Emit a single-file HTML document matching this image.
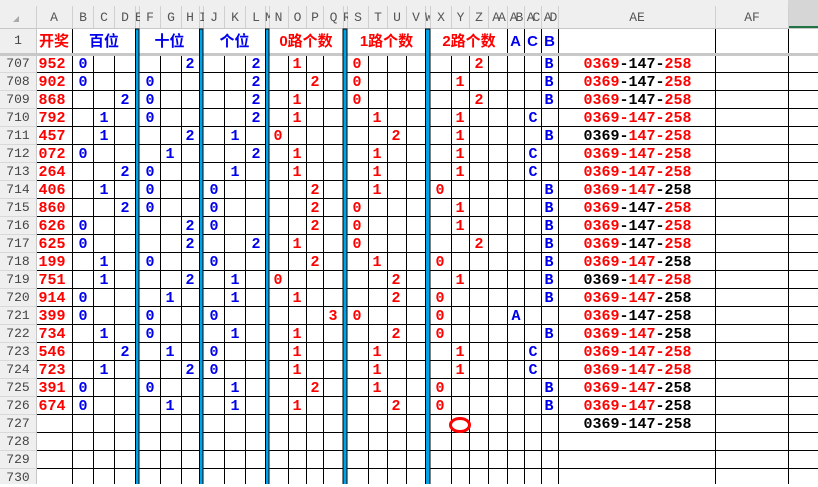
<!DOCTYPE html>
<html><head><meta charset="utf-8"><style>
*{margin:0;padding:0}
body{width:818px;height:484px;overflow:hidden;background:#fff;position:relative;font-family:"Liberation Mono","Noto Sans CJK SC",monospace}
svg{position:absolute;left:0;top:0}
.h{position:absolute;top:6px;height:22px;line-height:24px;font-size:13px;color:#555;text-align:center;font-family:"Liberation Mono",monospace}
.rn{position:absolute;left:0;width:36px;text-align:center;font-size:13px;color:#444;height:18px;line-height:18px}
.r{position:absolute;left:0;width:818px;height:18px;line-height:19px;font-size:15px;font-weight:bold}
.r i,.r b,.r u{position:absolute;font-style:normal;text-decoration:none;width:20px;text-align:center}
.r i{color:#ff0000;width:36px;left:34px}
.r b{color:#0000ee}
.r u{color:#ff0000}
.r em{position:absolute;left:560px;width:155px;text-align:center;font-style:normal;color:#000}
em s{text-decoration:none;color:#ff0000}
.t{position:absolute;top:28px;height:26px;line-height:27px;font-size:15px;font-weight:bold;text-align:center;font-family:"Liberation Sans","Noto Sans CJK SC",sans-serif}
</style></head><body>
<svg width="818" height="484">
<rect x="0" y="0" width="818" height="28" fill="#efefef"/>
<rect x="0" y="28" width="36" height="456" fill="#efefef"/>
<rect x="788" y="0" width="30" height="28" fill="#d6d6d6"/>
<rect x="788" y="26" width="30" height="2" fill="#217346"/>
<polygon points="19,16 19,22 13,22" fill="#aaa"/>
<path d="M36.5 6V28M72.5 6V28M93.5 6V28M114.5 6V28M135.5 6V28M139.5 6V28M160.5 6V28M181.5 6V28M199.5 6V28M203.5 6V28M224.5 6V28M245.5 6V28M265.5 6V28M269.5 6V28M288.5 6V28M306.5 6V28M323.5 6V28M343.5 6V28M347.5 6V28M368.5 6V28M387.5 6V28M406.5 6V28M425.5 6V28M430.5 6V28M451.5 6V28M469.5 6V28M488.5 6V28M507.5 6V28M524.5 6V28M541.5 6V28M558.5 6V28M715.5 6V28M788.5 6V28" stroke="#d0d0d0" stroke-width="1"/>
<path d="M0 28.5H818M36.5 28V484" stroke="#c8c8c8"/>
<path d="M0 72.5H36M0 90.5H36M0 108.5H36M0 126.5H36M0 144.5H36M0 162.5H36M0 180.5H36M0 198.5H36M0 216.5H36M0 234.5H36M0 252.5H36M0 270.5H36M0 288.5H36M0 306.5H36M0 324.5H36M0 342.5H36M0 360.5H36M0 378.5H36M0 396.5H36M0 414.5H36M0 432.5H36M0 450.5H36M0 468.5H36" stroke="#d8d8d8"/>
<path d="M37 72.5H818M37 90.5H818M37 108.5H818M37 126.5H818M37 144.5H818M37 162.5H818M37 180.5H818M37 198.5H818M37 216.5H818M37 234.5H818M37 252.5H818M37 270.5H818M37 288.5H818M37 306.5H818M37 324.5H818M37 342.5H818M37 360.5H818M37 378.5H818M37 396.5H818M37 414.5H818M37 432.5H818M37 450.5H818M37 468.5H818" stroke="#000"/>
<path d="M72.5 29V484M507.5 29V484M524.5 29V484M541.5 29V484M558.5 29V484M715.5 29V484M788.5 29V484M93.5 55V484M114.5 55V484M160.5 55V484M181.5 55V484M224.5 55V484M245.5 55V484M288.5 55V484M306.5 55V484M323.5 55V484M368.5 55V484M387.5 55V484M406.5 55V484M451.5 55V484M469.5 55V484M488.5 55V484" stroke="#000"/>
<rect x="0" y="53" width="818" height="3" fill="#c8c8c8"/>
<g fill="#00a2e8" stroke="#000" stroke-width="1">
<rect x="135.5" y="29" width="3.5" height="460"/>
<rect x="199.5" y="29" width="3.5" height="460"/>
<rect x="265.5" y="29" width="3.5" height="460"/>
<rect x="343" y="29" width="4" height="460"/>
<rect x="425.5" y="29" width="4.5" height="460"/>
</g>
<ellipse cx="460" cy="425" rx="9.5" ry="6.5" fill="none" stroke="#ff0000" stroke-width="3"/>
</svg>
<div class="h" style="left:36px;width:36px">A</div><div class="h" style="left:73px;width:20px">B</div><div class="h" style="left:94px;width:20px">C</div><div class="h" style="left:115px;width:20px">D</div><div class="h" style="left:135px;width:5px;overflow:hidden">E</div><div class="h" style="left:140px;width:20px">F</div><div class="h" style="left:161px;width:20px">G</div><div class="h" style="left:181px;width:18px">H</div><div class="h" style="left:199px;width:5px;overflow:hidden">I</div><div class="h" style="left:204px;width:20px">J</div><div class="h" style="left:225px;width:20px">K</div><div class="h" style="left:246px;width:20px">L</div><div class="h" style="left:265px;width:5px;overflow:hidden">M</div><div class="h" style="left:269px;width:19px">N</div><div class="h" style="left:289px;width:17px">O</div><div class="h" style="left:307px;width:16px">P</div><div class="h" style="left:324px;width:19px">Q</div><div class="h" style="left:343px;width:5px;overflow:hidden">R</div><div class="h" style="left:348px;width:20px">S</div><div class="h" style="left:369px;width:18px">T</div><div class="h" style="left:388px;width:18px">U</div><div class="h" style="left:407px;width:18px">V</div><div class="h" style="left:425px;width:5px;overflow:hidden">W</div><div class="h" style="left:431px;width:20px">X</div><div class="h" style="left:452px;width:17px">Y</div><div class="h" style="left:470px;width:18px">Z</div><div class="h" style="left:489px;width:18px;letter-spacing:-2px">AA</div><div class="h" style="left:507px;width:17px;letter-spacing:-2px;overflow:hidden">AB</div><div class="h" style="left:524px;width:17px;letter-spacing:-2px;overflow:hidden">AC</div><div class="h" style="left:541px;width:17px;letter-spacing:-2px;overflow:hidden">AD</div><div class="h" style="left:559px;width:156px">AE</div><div class="h" style="left:716px;width:72px">AF</div>
<div class="rn" style="top:32px">1</div>
<div class="t" style="left:36px;width:36px;color:#f00">开奖</div>
<div class="t" style="left:73px;width:62px;color:#00e">百位</div>
<div class="t" style="left:140px;width:59px;color:#00e">十位</div>
<div class="t" style="left:204px;width:61px;color:#00e">个位</div>
<div class="t" style="left:269px;width:74px;color:#f00">0路个数</div>
<div class="t" style="left:348px;width:77px;color:#f00">1路个数</div>
<div class="t" style="left:431px;width:76px;color:#f00">2路个数</div>
<div class="t" style="left:507px;width:17px;color:#00e">A</div>
<div class="t" style="left:524px;width:17px;color:#00e">C</div>
<div class="t" style="left:541px;width:17px;color:#00e">B</div>

<div class="rn" style="top:55px">707</div><div class="rn" style="top:73px">708</div><div class="rn" style="top:91px">709</div><div class="rn" style="top:109px">710</div><div class="rn" style="top:127px">711</div><div class="rn" style="top:145px">712</div><div class="rn" style="top:163px">713</div><div class="rn" style="top:181px">714</div><div class="rn" style="top:199px">715</div><div class="rn" style="top:217px">716</div><div class="rn" style="top:235px">717</div><div class="rn" style="top:253px">718</div><div class="rn" style="top:271px">719</div><div class="rn" style="top:289px">720</div><div class="rn" style="top:307px">721</div><div class="rn" style="top:325px">722</div><div class="rn" style="top:343px">723</div><div class="rn" style="top:361px">724</div><div class="rn" style="top:379px">725</div><div class="rn" style="top:397px">726</div><div class="rn" style="top:415px">727</div><div class="rn" style="top:433px">728</div><div class="rn" style="top:451px">729</div><div class="rn" style="top:469px">730</div>

<div class="r" style="top:55px"><i>952</i><b style="left:73px">0</b><b style="left:180px">2</b><b style="left:246px">2</b><u style="left:287px">1</u><u style="left:347px">0</u><u style="left:469px">2</u><b style="left:539px">B</b><em><s>0369</s>-147-<s>258</s></em></div>
<div class="r" style="top:73px"><i>902</i><b style="left:73px">0</b><b style="left:140px">0</b><b style="left:246px">2</b><u style="left:305px">2</u><u style="left:347px">0</u><u style="left:450px">1</u><b style="left:539px">B</b><em><s>0369</s>-147-<s>258</s></em></div>
<div class="r" style="top:91px"><i>868</i><b style="left:115px">2</b><b style="left:140px">0</b><b style="left:246px">2</b><u style="left:287px">1</u><u style="left:347px">0</u><u style="left:469px">2</u><b style="left:539px">B</b><em><s>0369</s>-147-<s>258</s></em></div>
<div class="r" style="top:109px"><i>792</i><b style="left:94px">1</b><b style="left:140px">0</b><b style="left:246px">2</b><u style="left:287px">1</u><u style="left:367px">1</u><u style="left:450px">1</u><b style="left:523px">C</b><em><s>0369-147-258</s></em></div>
<div class="r" style="top:127px"><i>457</i><b style="left:94px">1</b><b style="left:180px">2</b><b style="left:225px">1</b><u style="left:268px">0</u><u style="left:386px">2</u><u style="left:450px">1</u><b style="left:539px">B</b><em>0369-<s>147-258</s></em></div>
<div class="r" style="top:145px"><i>072</i><b style="left:73px">0</b><b style="left:160px">1</b><b style="left:246px">2</b><u style="left:287px">1</u><u style="left:367px">1</u><u style="left:450px">1</u><b style="left:523px">C</b><em><s>0369-147-258</s></em></div>
<div class="r" style="top:163px"><i>264</i><b style="left:115px">2</b><b style="left:140px">0</b><b style="left:225px">1</b><u style="left:287px">1</u><u style="left:367px">1</u><u style="left:450px">1</u><b style="left:523px">C</b><em><s>0369-147-258</s></em></div>
<div class="r" style="top:181px"><i>406</i><b style="left:94px">1</b><b style="left:140px">0</b><b style="left:204px">0</b><u style="left:305px">2</u><u style="left:367px">1</u><u style="left:430px">0</u><b style="left:539px">B</b><em><s>0369-147</s>-258</em></div>
<div class="r" style="top:199px"><i>860</i><b style="left:115px">2</b><b style="left:140px">0</b><b style="left:204px">0</b><u style="left:305px">2</u><u style="left:347px">0</u><u style="left:450px">1</u><b style="left:539px">B</b><em><s>0369</s>-147-<s>258</s></em></div>
<div class="r" style="top:217px"><i>626</i><b style="left:73px">0</b><b style="left:180px">2</b><b style="left:204px">0</b><u style="left:305px">2</u><u style="left:347px">0</u><u style="left:450px">1</u><b style="left:539px">B</b><em><s>0369</s>-147-<s>258</s></em></div>
<div class="r" style="top:235px"><i>625</i><b style="left:73px">0</b><b style="left:180px">2</b><b style="left:246px">2</b><u style="left:287px">1</u><u style="left:347px">0</u><u style="left:469px">2</u><b style="left:539px">B</b><em><s>0369</s>-147-<s>258</s></em></div>
<div class="r" style="top:253px"><i>199</i><b style="left:94px">1</b><b style="left:140px">0</b><b style="left:204px">0</b><u style="left:305px">2</u><u style="left:367px">1</u><u style="left:430px">0</u><b style="left:539px">B</b><em><s>0369-147</s>-258</em></div>
<div class="r" style="top:271px"><i>751</i><b style="left:94px">1</b><b style="left:180px">2</b><b style="left:225px">1</b><u style="left:268px">0</u><u style="left:386px">2</u><u style="left:450px">1</u><b style="left:539px">B</b><em>0369-<s>147-258</s></em></div>
<div class="r" style="top:289px"><i>914</i><b style="left:73px">0</b><b style="left:160px">1</b><b style="left:225px">1</b><u style="left:287px">1</u><u style="left:386px">2</u><u style="left:430px">0</u><b style="left:539px">B</b><em><s>0369-147</s>-258</em></div>
<div class="r" style="top:307px"><i>399</i><b style="left:73px">0</b><b style="left:140px">0</b><b style="left:204px">0</b><u style="left:323px">3</u><u style="left:347px">0</u><u style="left:430px">0</u><b style="left:506px">A</b><em><s>0369</s>-147-258</em></div>
<div class="r" style="top:325px"><i>734</i><b style="left:94px">1</b><b style="left:140px">0</b><b style="left:225px">1</b><u style="left:287px">1</u><u style="left:386px">2</u><u style="left:430px">0</u><b style="left:539px">B</b><em><s>0369-147</s>-258</em></div>
<div class="r" style="top:343px"><i>546</i><b style="left:115px">2</b><b style="left:160px">1</b><b style="left:204px">0</b><u style="left:287px">1</u><u style="left:367px">1</u><u style="left:450px">1</u><b style="left:523px">C</b><em><s>0369-147-258</s></em></div>
<div class="r" style="top:361px"><i>723</i><b style="left:94px">1</b><b style="left:180px">2</b><b style="left:204px">0</b><u style="left:287px">1</u><u style="left:367px">1</u><u style="left:450px">1</u><b style="left:523px">C</b><em><s>0369-147-258</s></em></div>
<div class="r" style="top:379px"><i>391</i><b style="left:73px">0</b><b style="left:140px">0</b><b style="left:225px">1</b><u style="left:305px">2</u><u style="left:367px">1</u><u style="left:430px">0</u><b style="left:539px">B</b><em><s>0369-147</s>-258</em></div>
<div class="r" style="top:397px"><i>674</i><b style="left:73px">0</b><b style="left:160px">1</b><b style="left:225px">1</b><u style="left:287px">1</u><u style="left:386px">2</u><u style="left:430px">0</u><b style="left:539px">B</b><em><s>0369-147</s>-258</em></div>
<div class="r" style="top:415px"><em>0369-147-258</em></div>
</body></html>
